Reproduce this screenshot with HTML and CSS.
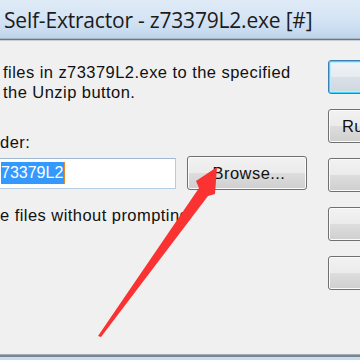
FILE: index.html
```html
<!DOCTYPE html>
<html>
<head>
<meta charset="utf-8">
<link rel="stylesheet" href="styles.css">
</head>
<body>
<div class="window">
  <div class="titlebar"><span class="title">Self-Extractor - z73379L2.exe [#]</span></div>
  <div class="frame-line"></div>
  <div class="content">
    <div class="main">
      <p class="intro">files in z73379L2.exe to the specified<br>the Unzip button.</p>
      <div class="label">der:</div>
      <div class="field-row">
        <div class="field"><span class="sel">73379L2</span></div>
        <div class="btn browse">Browse...</div>
      </div>
      <div class="check">e files without prompting</div>
    </div>
    <div class="side">
      <div class="btn side-btn default"></div>
      <div class="btn side-btn">Run WinZip</div>
      <div class="btn side-btn"></div>
      <div class="btn side-btn"></div>
      <div class="btn side-btn"></div>
    </div>
  </div>
  <div class="bottom-line"></div>
</div>
<svg class="arrow" width="360" height="360" viewBox="0 0 360 360">
  <polygon points="217,167 215,194 208,196 101,337 98,336 199,188 196,181" fill="#fb3232"/>
</svg>
</body>
</html>
```
FILE: styles.css
```css
html, body {
  margin: 0;
  padding: 0;
}
body {
  width: 360px;
  height: 360px;
  overflow: hidden;
  position: relative;
  background: #f0f0f0;
  font-family: "Liberation Sans", Arial, sans-serif;
  color: #111;
}
.window {
  display: flex;
  flex-direction: column;
  height: 360px;
}
.titlebar {
  height: 38px;
  flex: none;
  background: linear-gradient(to bottom, #dfeaf6 0%, #d6e5f5 45%, #c9dcf0 80%, #bed3ea 100%);
  display: flex;
  align-items: center;
  padding-left: 4px;
  overflow: hidden;
  white-space: nowrap;
}
.title {
  font-family: "Open Sans", "Noto Sans", sans-serif;
  font-size: 21px;
  color: #1b1b1b;
  letter-spacing: -0.2px;
  margin-top: 2px;
}
.frame-line {
  height: 3px;
  flex: none;
  background: linear-gradient(to bottom, #a9b6c4 0, #a9b6c4 1px, #6e7780 1px, #6e7780 2px, #c9ced3 2px);
}
.content {
  flex: 1;
  display: flex;
  overflow: hidden;
}
.main {
  width: 328px;
  flex: none;
  font-size: 16.5px;
  letter-spacing: 0.45px;
}
.intro {
  margin: 21px 0 0 3px;
  line-height: 20px;
  white-space: nowrap;
}
.label {
  margin-top: 30px;
  line-height: 20px;
}
.field-row {
  display: flex;
  align-items: center;
  margin-top: 4px;
  gap: 11px;
}
.field {
  width: 178px;
  height: 31px;
  margin-left: -2px;
  box-sizing: border-box;
  background: #fff;
  border: 1px solid #b5cde2;
  border-top-color: #9fb9d0;
  display: flex;
  align-items: center;
  padding-left: 2px;
  letter-spacing: 0;
  font-size: 16px;
}
.sel {
  background: #3399ff;
  color: #fff;
  line-height: 22px;
  height: 22px;
  padding-right: 1px;
  border-right: 1px solid #e8892a;
}
.btn {
  box-sizing: border-box;
  border: 1px solid #707070;
  border-radius: 3px;
  box-shadow: inset 0 0 0 1px #fbfbfb;
  background: linear-gradient(to bottom, #f2f2f2 0%, #ebebeb 50%, #dddddd 51%, #cfcfcf 100%);
  display: flex;
  align-items: center;
  font-size: 16.5px;
  letter-spacing: 0.45px;
  white-space: nowrap;
}
.browse {
  width: 120px;
  height: 34px;
  justify-content: center;
  padding-left: 4px;
}
.check {
  margin-top: 15px;
  line-height: 20px;
  white-space: nowrap;
}
.side {
  flex: 1;
  display: flex;
  flex-direction: column;
  gap: 15px;
  padding-top: 19px;
}
.side-btn {
  width: 100px;
  height: 34px;
  padding-left: 13px;
}
.side-btn.default {
  border-color: #3c7fb1;
  box-shadow: inset 0 0 0 1px #48d3fb, inset 0 0 0 2px #bfeafd;
  background: linear-gradient(to bottom, #f1f4f7 0%, #e6ebf0 50%, #d9e0e7 51%, #d0d8df 100%);
}
.bottom-line {
  height: 6px;
  flex: none;
  background: linear-gradient(to bottom, #a3abb3 0, #a3abb3 1px, #7b8590 1px, #7b8590 3px, #c6dcf2 3px);
}
.arrow {
  position: absolute;
  left: 0;
  top: 0;
  pointer-events: none;
}
```
